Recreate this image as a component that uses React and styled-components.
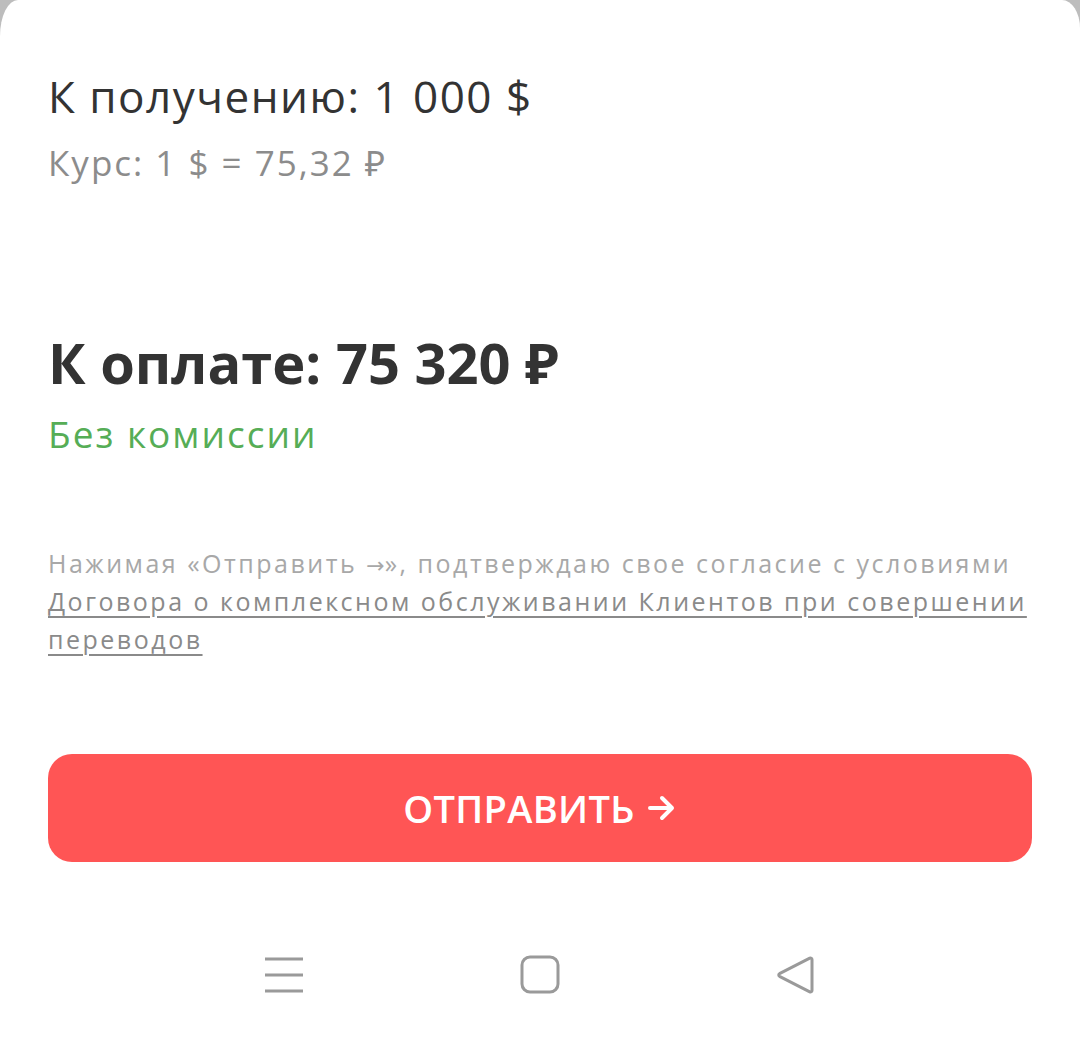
import React from "react";
import styled, { createGlobalStyle } from "styled-components";

const GlobalStyle = createGlobalStyle`
  html, body {
    margin: 0;
    padding: 0;
    background: #bdbdbd;
  }
  body {
    font-family: "Open Sans", "Noto Sans", sans-serif;
  }
`;

const Sheet = styled.div`
  background: #ffffff;
  width: 1080px;
  height: 1042px;
  border-radius: 18px 18px 0 0 / 36px 28px 0 0;
  display: flex;
  flex-direction: column;
  box-sizing: border-box;
`;

const Content = styled.div`
  padding: 0 48px;
  flex: 1;
  display: flex;
  flex-direction: column;
`;

const Receive = styled.div`
  margin-top: 68px;
  font-size: 44px;
  line-height: 56px;
  letter-spacing: 1.5px;
  color: #333333;
`;

const Rate = styled.div`
  margin-top: 17px;
  font-size: 35px;
  line-height: 44px;
  letter-spacing: 2px;
  color: #8c8c8c;
`;

const Pay = styled.div`
  margin-top: 143px;
  font-size: 56px;
  line-height: 68px;
  font-weight: 700;
  color: #333333;
`;

const Commission = styled.div`
  margin-top: 14px;
  font-size: 37px;
  line-height: 48px;
  letter-spacing: 2px;
  color: #56ad56;
`;

const Terms = styled.p`
  margin: 86px 0 0;
  font-size: 25px;
  line-height: 38px;
  color: #a8a8a8;
  letter-spacing: 2.5px;
`;

const ArrowGlyph = styled.span`
  font-family: "DejaVu Sans", sans-serif;
  font-size: 22px;
  line-height: 1;
  letter-spacing: 0;
`;

const TermsLink = styled.a`
  color: #8a8a8a;
  text-decoration: underline;
  text-underline-offset: 5px;
  text-decoration-thickness: 1.5px;
`;

const SendButton = styled.button`
  margin-top: 96px;
  height: 108px;
  width: 100%;
  border: none;
  border-radius: 24px;
  background: #ff5555;
  color: #ffffff;
  font-family: "Open Sans", "Noto Sans", sans-serif;
  font-size: 38px;
  font-weight: 600;
  letter-spacing: 0.3px;
  display: flex;
  align-items: center;
  justify-content: center;
  gap: 12px;
  cursor: pointer;
`;

const NavBar = styled.div`
  height: 110px;
  display: flex;
  align-items: center;
  justify-content: center;
  gap: 216px;
  padding-bottom: 24px;
  box-sizing: border-box;
`;

const NavIcon = styled.svg`
  width: 40px;
  height: 40px;
  stroke: #9a9a9a;
  stroke-width: 3;
  fill: none;
  stroke-linecap: round;
  stroke-linejoin: round;
`;

const Arrow = () => (
  <svg width="30" height="26" viewBox="0 0 30 26" fill="none">
    <path d="M3 13h22M15 3l10 10-10 10" stroke="#fff" strokeWidth="4" strokeLinecap="round" strokeLinejoin="round" />
  </svg>
);

export default function App() {
  return (
    <>
      <GlobalStyle />
      <Sheet>
        <Content>
          <Receive>К получению: 1 000 $</Receive>
          <Rate>Курс: 1 $ = 75,32 ₽</Rate>
          <Pay>К оплате: 75 320 ₽</Pay>
          <Commission>Без комиссии</Commission>
          <Terms>
            Нажимая «Отправить <ArrowGlyph>→</ArrowGlyph>», подтверждаю свое согласие с условиями{" "}
            <TermsLink href="#">
              Договора о комплексном обслуживании Клиентов при совершении
              переводов
            </TermsLink>
          </Terms>
          <SendButton>
            ОТПРАВИТЬ <Arrow />
          </SendButton>
        </Content>
        <NavBar>
          <NavIcon viewBox="0 0 40 40" style={{ strokeLinecap: "butt" }}>
            <path d="M1 4h38M1 20h38M1 36h38" />
          </NavIcon>
          <NavIcon viewBox="0 0 40 40">
            <rect x="2" y="2" width="36" height="35" rx="8" />
          </NavIcon>
          <NavIcon viewBox="0 0 40 40">
            <path d="M36 4.5v31a1.5 1.5 0 0 1-2.2 1.3L3.5 21.3a1.5 1.5 0 0 1 0-2.6L33.8 3.2A1.5 1.5 0 0 1 36 4.5z" />
          </NavIcon>
        </NavBar>
      </Sheet>
    </>
  );
}
